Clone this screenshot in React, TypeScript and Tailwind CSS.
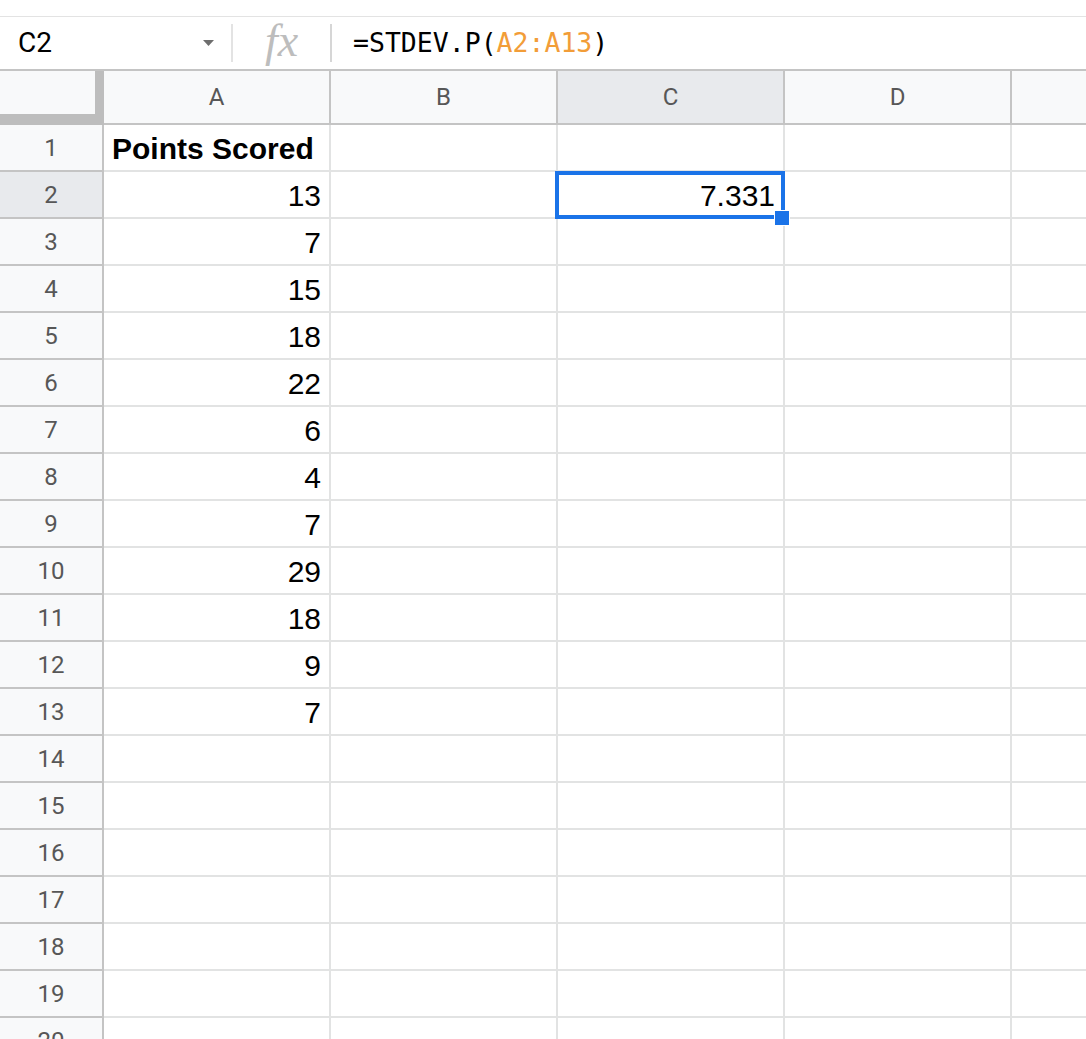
import React from 'react'

const cols = ['A', 'B', 'C', 'D']
const values = ['13', '7', '15', '18', '22', '6', '4', '7', '29', '18', '9', '7']

export default function App() {
  const rows = Array.from({ length: 20 }, (_, i) => i + 1)

  return (
    <div className="h-[1039px] w-[1086px] overflow-hidden bg-white" style={{ fontFamily: '"Liberation Sans", Arial, sans-serif' }}>
      <div className="h-[16px]" />

      {/* Formula bar */}
      <div className="flex h-[55px] border-t border-b-2 border-t-[#e3e3e3] border-b-[#c4c4c4] items-center">
        <div className="w-[231px] h-full flex items-center justify-between pl-[18px] pr-[17px]">
          <span className="text-[28px] text-black" style={{ fontFamily: 'Roboto, sans-serif' }}>C2</span>
          <svg width="11" height="6" viewBox="0 0 11 6">
            <path d="M0 0 L11 0 L5.5 6 Z" fill="#6e6e6e" />
          </svg>
        </div>
        <div className="w-[2px] h-[38px] bg-[#e3e3e3]" />
        <div className="w-[97px] h-full flex items-center justify-center">
          <span className="text-[46px] italic text-[#bdbdbd] leading-none -mt-[4px]" style={{ fontFamily: '"Liberation Serif", serif' }}>fx</span>
        </div>
        <div className="w-[2px] h-[38px] bg-[#d6d6d6]" />
        <div className="pl-[21px] text-[26.5px] text-black" style={{ fontFamily: '"DejaVu Sans Mono", monospace' }}>
          =STDEV.P(<span className="text-[#f29d38]">A2:A13</span>)
        </div>
      </div>

      {/* Column headers */}
      <div className="flex h-[54px]" style={{ fontFamily: 'Roboto, sans-serif' }}>
        <div className="w-[104px] h-full bg-[#f8f9fa] border-r-[9px] border-b-[11px] border-[#bdbdbd]" />
        {cols.map((c) => (
          <div
            key={c}
            className={`w-[227px] h-full flex items-center justify-center border-r-2 border-b-2 border-[#c4c4c4] text-[24px] text-[#575757] ${c === 'C' ? 'bg-[#e8eaed]' : 'bg-[#f8f9fa]'}`}
          >
            {c}
          </div>
        ))}
        <div className="flex-1 h-full bg-[#f8f9fa] border-b-2 border-[#c4c4c4]" />
      </div>

      {/* Grid */}
      {rows.map((r) => (
        <div key={r} className="flex h-[47px]">
          <div
            className={`w-[104px] h-full flex items-center justify-center border-r-2 border-b-2 border-[#c4c4c4] text-[24px] text-[#575757] ${r === 2 ? 'bg-[#e8eaed]' : 'bg-[#f8f9fa]'}`}
            style={{ fontFamily: 'Roboto, sans-serif' }}
          >
            {r}
          </div>
          {cols.map((c) => (
            <div
              key={c}
              className={`relative w-[227px] h-full flex items-center border-r-2 border-b-2 border-[#e2e3e3] px-2 pt-[2px] text-[30px] text-black ${r === 1 && c === 'A' ? 'justify-start font-bold' : 'justify-end'}`}
            >
              {c === 'A' && r === 1 && 'Points Scored'}
              {c === 'A' && r >= 2 && r <= 13 && values[r - 2]}
              {c === 'C' && r === 2 && (
                <>
                  7.331
                  <div className="absolute -left-[3px] -top-[1px] w-[230px] h-[48px] border-4 border-[#1a73e8] z-10 pointer-events-none" />
                  <div className="absolute left-[216px] top-[38px] w-[16px] h-[16px] bg-[#1a73e8] border border-white z-20" />
                </>
              )}
            </div>
          ))}
          <div className="flex-1 h-full border-b-2 border-[#e2e3e3]" />
        </div>
      ))}
    </div>
  )
}
